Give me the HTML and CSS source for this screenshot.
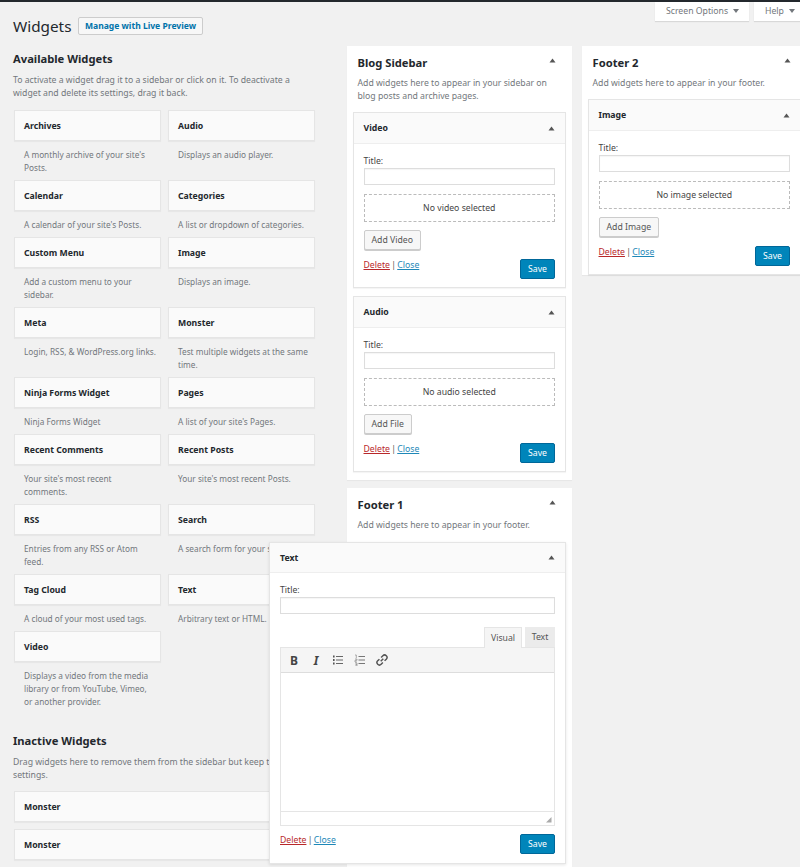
FILE: index.html
```html
<!DOCTYPE html>
<html lang="en">
<head>
<meta charset="utf-8">
<title>Widgets</title>
<link rel="stylesheet" href="styles.css">
</head>
<body>
<svg class="defs" width="0" height="0" aria-hidden="true"><symbol id="up" viewBox="0 0 8 6"><path d="M4 0.5 7.6 5.500H0.400Z"/></symbol></svg>
<div class="adminbar"></div>
<div class="tabs">
  <div class="tab tab-screen">Screen Options <i class="caret"></i></div>
  <div class="tab tab-help">Help <i class="caret"></i></div>
</div>
<div class="page">
  <div class="col-left">
    <div class="title-row">
      <h1>Widgets</h1>
      <span class="live">Manage with Live Preview</span>
    </div>
    <h2 class="sec">Available Widgets</h2>
    <p class="sec-desc">To activate a widget drag it to a sidebar or click on it. To deactivate a widget and delete its settings, drag it back.</p>
    <div class="grid">
      <div class="item"><div class="card">Archives</div><p>A monthly archive of your site's Posts.</p></div>
      <div class="item"><div class="card">Audio</div><p>Displays an audio player.</p></div>
      <div class="item"><div class="card">Calendar</div><p>A calendar of your site's Posts.</p></div>
      <div class="item"><div class="card">Categories</div><p>A list or dropdown of categories.</p></div>
      <div class="item"><div class="card">Custom Menu</div><p>Add a custom menu to your sidebar.</p></div>
      <div class="item"><div class="card">Image</div><p>Displays an image.</p></div>
      <div class="item"><div class="card">Meta</div><p>Login, RSS, &amp; WordPress.org links.</p></div>
      <div class="item"><div class="card">Monster</div><p>Test multiple widgets at the same time.</p></div>
      <div class="item"><div class="card">Ninja Forms Widget</div><p>Ninja Forms Widget</p></div>
      <div class="item"><div class="card">Pages</div><p>A list of your site's Pages.</p></div>
      <div class="item"><div class="card">Recent Comments</div><p>Your site's most recent<br>comments.</p></div>
      <div class="item"><div class="card">Recent Posts</div><p>Your site's most recent Posts.</p></div>
      <div class="item"><div class="card">RSS</div><p>Entries from any RSS or Atom feed.</p></div>
      <div class="item"><div class="card">Search</div><p>A search form for your site.</p></div>
      <div class="item"><div class="card">Tag Cloud</div><p>A cloud of your most used tags.</p></div>
      <div class="item"><div class="card">Text</div><p>Arbitrary text or HTML.</p></div>
      <div class="item"><div class="card">Video</div><p>Displays a video from the media library or from YouTube, Vimeo, or another provider.</p></div>
    </div>
    <h2 class="sec sec-inactive">Inactive Widgets</h2>
    <p class="sec-desc">Drag widgets here to remove them from the sidebar but keep their settings.</p>
    <div class="card card-wide">Monster</div>
    <div class="card card-wide">Monster</div>
  </div>

  <div class="col-mid">
    <section class="sidebar">
      <div class="side-head"><h2>Blog Sidebar</h2><svg class="up"><use href="#up"/></svg></div>
      <p class="side-desc">Add widgets here to appear in your sidebar on blog posts and archive pages.</p>
      <div class="widget">
        <div class="w-head"><span>Video</span><svg class="up"><use href="#up"/></svg></div>
        <div class="w-body">
          <label>Title:</label>
          <div class="input"></div>
          <div class="none">No video selected</div>
          <div class="btn">Add Video</div>
          <div class="w-foot"><span class="links"><a class="del">Delete</a> | <a class="close">Close</a></span><span class="save">Save</span></div>
        </div>
      </div>
      <div class="widget">
        <div class="w-head"><span>Audio</span><svg class="up"><use href="#up"/></svg></div>
        <div class="w-body">
          <label>Title:</label>
          <div class="input"></div>
          <div class="none">No audio selected</div>
          <div class="btn">Add File</div>
          <div class="w-foot"><span class="links"><a class="del">Delete</a> | <a class="close">Close</a></span><span class="save">Save</span></div>
        </div>
      </div>
    </section>
    <section class="sidebar sidebar-fill">
      <div class="side-head"><h2>Footer 1</h2><svg class="up"><use href="#up"/></svg></div>
      <p class="side-desc">Add widgets here to appear in your footer.</p>
    </section>
  </div>

  <div class="col-right">
    <section class="sidebar">
      <div class="side-head"><h2>Footer 2</h2><svg class="up"><use href="#up"/></svg></div>
      <p class="side-desc">Add widgets here to appear in your footer.</p>
      <div class="widget">
        <div class="w-head"><span>Image</span><svg class="up"><use href="#up"/></svg></div>
        <div class="w-body">
          <label>Title:</label>
          <div class="input"></div>
          <div class="none">No image selected</div>
          <div class="btn">Add Image</div>
          <div class="w-foot"><span class="links"><a class="del">Delete</a> | <a class="close">Close</a></span><span class="save">Save</span></div>
        </div>
      </div>
    </section>
  </div>
</div>

<div class="widget dragged">
  <div class="w-head"><span>Text</span><svg class="up"><use href="#up"/></svg></div>
  <div class="w-body">
    <label>Title:</label>
    <div class="input"></div>
    <div class="ed-tabs"><span class="ed-tab on">Visual</span><span class="ed-tab">Text</span></div>
    <div class="editor">
      <div class="toolbar">
        <span class="tb">B</span>
        <span class="tb tb-i">I</span>
        <svg class="ic" viewBox="0 0 12 12"><path d="M4 2.500h7M4 6h7M4 9.500h7" stroke="#666" fill="none"/><path d="M1 1.500h1.600v2H1zM1 5h1.600v2H1zM1 8.500h1.600v2H1z" fill="#555"/></svg>
        <svg class="ic" viewBox="0 0 12 12"><path d="M4.500 2.500H11M4.500 6H11M4.500 9.500H11" stroke="#777" fill="none"/><path d="M1 1h1.300v3M1 5h2v1.300H1V8h2M1 9h2v3H1M1.500 10.500H3" stroke="#777" stroke-width=".6" fill="none"/></svg>
        <svg class="ic" viewBox="0 0 14 14"><path d="M5.500 8.500 8.500 5.500M6 4 8 2a2.600 2.600 0 0 1 4 4L10 8M8 10l-2 2a2.600 2.600 0 0 1-4-4L4 6" stroke="#555" stroke-width="1.700" fill="none"/></svg>
      </div>
      <div class="ed-area"></div>
      <div class="ed-status"><svg class="grip" viewBox="0 0 7 7"><path d="M6.500 1v5.500H1z" fill="#aaa"/></svg></div>
    </div>
    <div class="w-foot"><span class="links"><a class="del">Delete</a> | <a class="close">Close</a></span><span class="save">Save</span></div>
  </div>
</div>
</body>
</html>
```
FILE: styles.css
```css
* { box-sizing: border-box; }
html, body { margin: 0; padding: 0; height: 867px; overflow: hidden; }
body {
  position: relative;
  background: #f1f1f1;
  color: #444;
  font-family: "Noto Sans", "Open Sans", sans-serif;
  font-size: 8.700px;
  line-height: 13px;
}
.defs { position: absolute; }
p { margin: 0; }
.adminbar { height: 2px; background: #23282d; }

.tabs { display: flex; justify-content: flex-end; gap: 5px; height: 19px; }
.tab {
  background: #fff;
  color: #72777c;
  box-shadow: 0 1px 1px rgba(0,0,0,.1);
  display: flex;
  align-items: center;
  justify-content: space-between;
  padding: 0 5px 1px 11px;
}
.tab-screen { width: 94px; padding-right: 10px; }
.tab-help { width: 46px; }
.caret { width: 0; height: 0; border: 3px solid transparent; border-top: 4px solid #72777c; border-bottom: 0; }

.page { display: flex; align-items: stretch; height: 846px; }

.col-left { width: 347px; padding-left: 13px; flex: none; }
.title-row { display: flex; align-items: center; gap: 7px; margin-top: -7px; height: 24px; }
h1 { margin: 0; font-size: 15.300px; font-weight: 400; color: #23282d; line-height: 24px; }
.live {
  border: 1px solid #ccc;
  background: #f7f7f7;
  color: #0073aa;
  font-weight: 700;
  font-size: 8.550px;
  height: 18px;
  padding: 0 5.500px;
  line-height: 16px;
  border-radius: 2px;
}
.sec { margin: 13px 0 0; font-size: 11.200px; line-height: 16px; font-weight: 700; color: #23282d; }
.sec-desc { margin-top: 7px; width: 290px; color: #72777c; }
.grid {
  display: grid;
  grid-template-columns: 147px 147px;
  column-gap: 7px;
  margin: 10px 0 0 1px;
}
.card {
  height: 31px;
  line-height: 30px;
  padding-left: 9px;
  background: #fafafa;
  border: 1px solid #e5e5e5;
  box-shadow: 0 1px 1px rgba(0,0,0,.04);
  font-weight: 700;
  color: #23282d;
}
.item p { padding: 7px 4px 6px 10px; color: #72777c; font-size: 8.250px; }
.sec-inactive { margin-top: 19px; }
.card-wide { width: 300px; margin: 9px 0 0 1px; }
.card-wide + .card-wide { margin-top: 7px; }

.col-mid { width: 225px; flex: none; display: flex; flex-direction: column; gap: 8px; padding-top: 25px; }
.col-right { width: 225px; flex: none; margin-left: 10px; padding-top: 25px; }

.sidebar { background: #fff; box-shadow: 0 1px 1px rgba(0,0,0,.04); padding: 0 6px 0 5.500px; }
.sidebar-fill { flex: 1; }
.side-head { display: flex; justify-content: space-between; padding: 0 10px 0 5px; height: 33px; align-items: center; }
.side-head h2 { margin: 0; font-size: 11.200px; font-weight: 700; color: #23282d; }
.side-head .up { margin-top: -5px; }
.side-desc { padding: 0 5px; color: #72777c; margin-bottom: 9px; margin-top: -2px; }
.up { width: 7px; height: 5px; fill: #555; }

.widget { background: #fff; border: 1px solid #e5e5e5; box-shadow: 0 1px 1px rgba(0,0,0,.04); margin-bottom: 8px; }
.w-head { height: 31px; background: #fafafa; border-bottom: 1px solid #eee; padding: 0 10px; display: flex; justify-content: space-between; align-items: center; font-weight: 700; color: #23282d; }
.w-head span { margin-top: 1px; }
.w-body { padding: 11px 10px 8px; }
.w-body label { display: block; }
.input { height: 17px; background: #fff; border: 1px solid #ddd; box-shadow: inset 0 1px 1px rgba(0,0,0,.04); }
.none { height: 28px; margin-top: 9px; border: 1px dashed #bbb; text-align: center; line-height: 26px; }
.btn { width: fit-content; height: 20px; line-height: 18px; padding: 0 7px; margin-top: 8px; background: #f7f7f7; border: 1px solid #ccc; border-radius: 2px; box-shadow: 0 1px 0 #ccc; color: #555; }
.w-foot { display: flex; justify-content: space-between; align-items: flex-start; margin-top: 9px; }
.links { color: #555; word-spacing: -1px; }
.del { color: #b8282a; text-decoration: underline; }
.close { color: #1e88b8; text-decoration: underline; }
.save { display: block; width: 35px; height: 20px; line-height: 19px; text-align: center; background: #0085ba; border: 1px solid #006799; border-radius: 2px; color: #fff; }

.dragged { position: absolute; left: 269px; top: 542px; width: 297px; height: 322px; margin: 0; box-shadow: 0 1px 3px rgba(0,0,0,.1); }
.dragged .w-head { height: 30px; }
.dragged .w-foot { margin-top: 8px; }
.ed-tabs { display: flex; justify-content: flex-end; gap: 3px; margin-top: 13px; height: 20px; }
.ed-tab { width: 30px; height: 20px; line-height: 20px; text-align: center; background: #ebebeb; color: #555; }
.ed-tab.on { width: 38px; background: #f5f5f5; height: 21px; border: 1px solid #e5e5e5; border-bottom: 0; position: relative; }
.editor { border: 1px solid #e5e5e5; }
.toolbar { height: 25px; background: #f5f5f5; border-bottom: 1px solid #ddd; display: flex; align-items: center; gap: 10px; padding-left: 7px; }
.tb { width: 12px; text-align: center; color: #444; font-weight: 700; font-size: 12px; }
.tb-i { font-style: italic; }
.ic { width: 12px; height: 12px; }
.ed-area { height: 138px; background: #fff; }
.ed-status { height: 14px; border-top: 1px solid #e5e5e5; background: #fff; display: flex; justify-content: flex-end; align-items: flex-end; padding: 0 2px 2px 0; }
.grip { width: 7px; height: 7px; }
```
